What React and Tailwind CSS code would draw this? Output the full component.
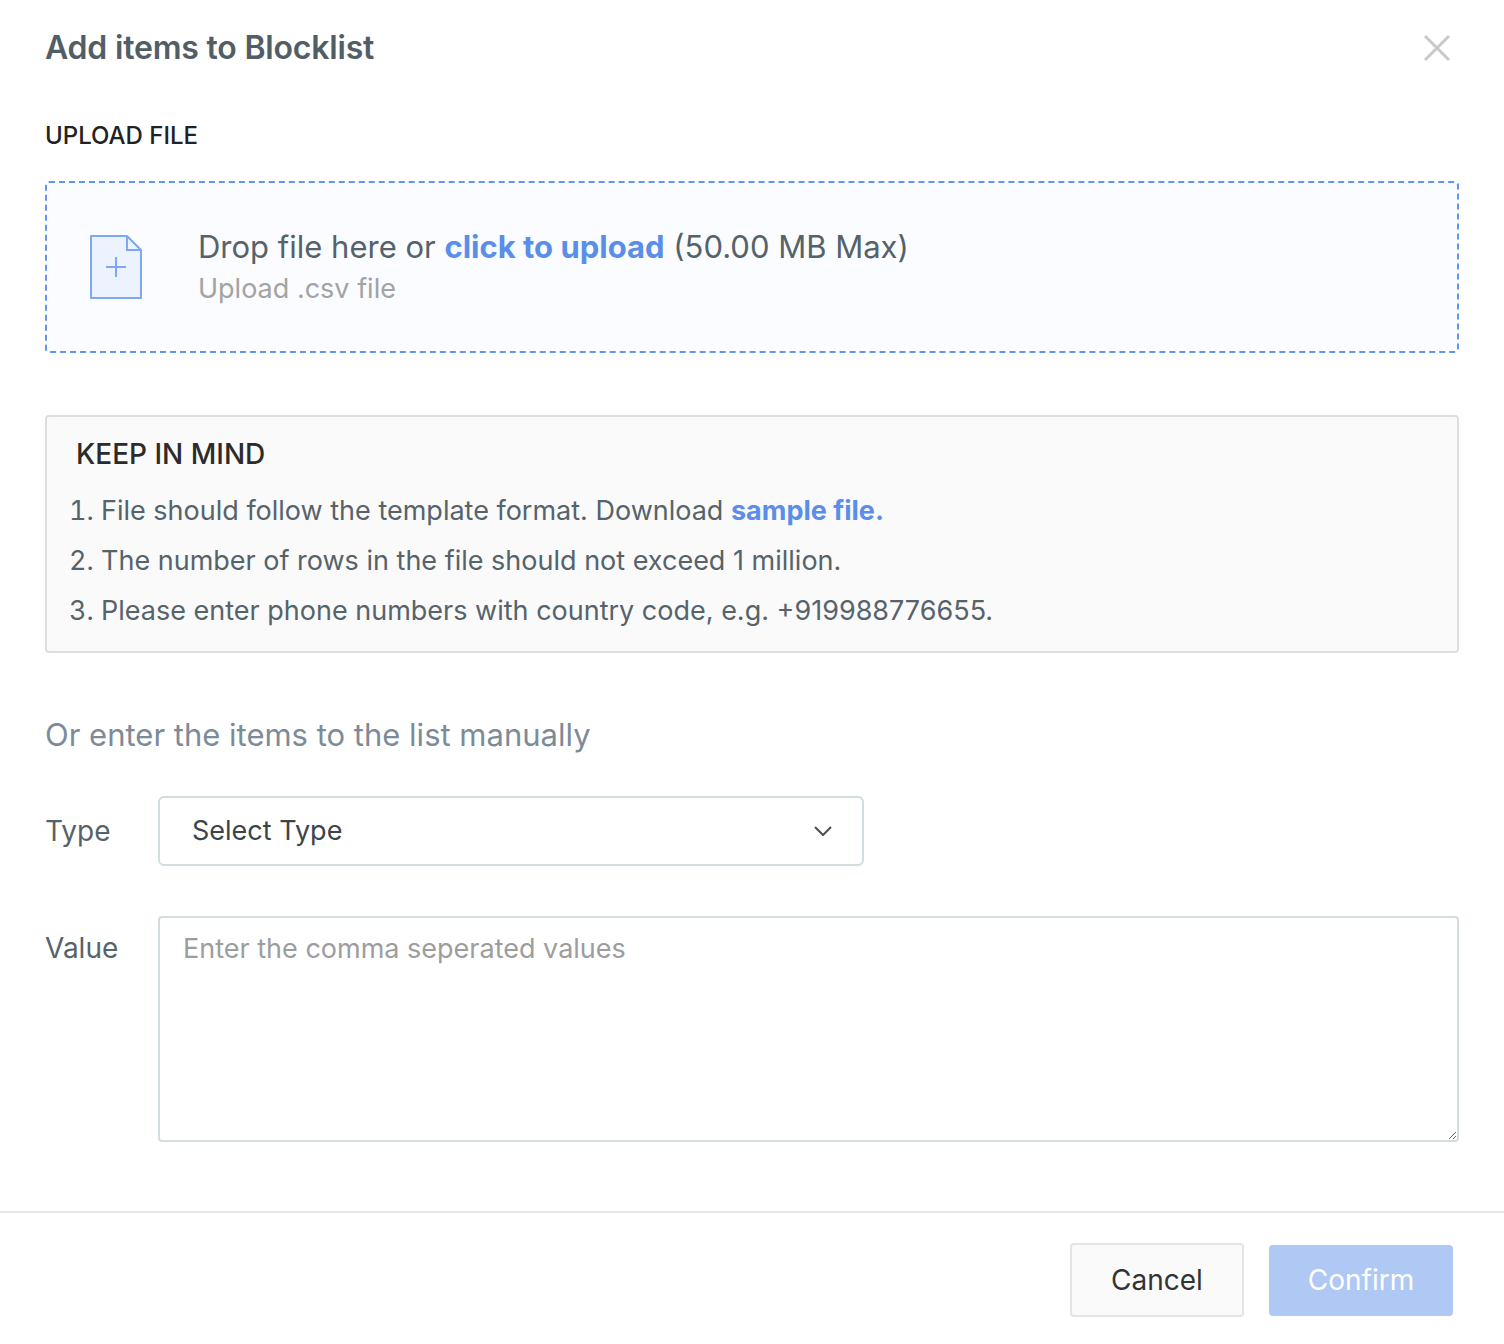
import { useState } from 'react';

function CloseIcon() {
  return (
    <svg width="28" height="28" viewBox="0 0 28 28" fill="none">
      <path d="M2 2 L26 26 M26 2 L2 26" stroke="#c9c9c9" strokeWidth="3" />
    </svg>
  );
}

function FileIcon() {
  return (
    <svg width="52" height="64" viewBox="0 0 52 64" fill="none">
      <path d="M1 1 H37 L51 15 V63 H1 Z" fill="#edf3fe" stroke="#7ea8f1" strokeWidth="2" strokeLinejoin="round" />
      <path d="M37 1 V15 H51" stroke="#7ea8f1" strokeWidth="2" />
      <path d="M26 22 V42 M16 32 H36" stroke="#7ea8f1" strokeWidth="2" />
    </svg>
  );
}

function Chevron() {
  return (
    <svg width="18" height="10" viewBox="0 0 18 10" fill="none">
      <path d="M1 1 L9 9 L17 1" stroke="#4a4f54" strokeWidth="2" />
    </svg>
  );
}

export default function App() {
  const [value, setValue] = useState('');

  return (
    <div className="min-h-screen bg-white font-['Inter','Liberation_Sans',sans-serif]">
      <div className="flex items-center justify-between pl-[45px] pr-[53px] pt-[28px]">
        <h2 className="text-[32px] font-semibold leading-[40px] tracking-[-0.2px] text-[#525e66]">
          Add items to Blocklist
        </h2>
        <button className="text-[#c9c9c9]">
          <CloseIcon />
        </button>
      </div>

      <div className="px-[45px]">
        <div className="mt-[52px] text-[24px] font-medium leading-[32px] text-[#222]">
          UPLOAD FILE
        </div>

        <div className="mt-[29px] flex h-[172px] items-center rounded-[4px] border-2 border-dashed border-[#6395ee] bg-[#fafcff] pl-[43px]">
          <FileIcon />
          <div className="ml-[56px]">
            <div className="text-[31px] leading-[44px] text-[#55626a]">
              Drop file here or{' '}
              <span className="font-bold text-[#5a8ee9]">click to upload</span>{' '}
              (50.00 MB Max)
            </div>
            <div className="text-[27px] leading-[40px] text-[#a3a3a3]">
              Upload .csv file
            </div>
          </div>
        </div>

        <div className="mt-[62px] rounded-[4px] border-2 border-[#dedede] bg-[#fafafa] px-[29px] pb-[15px] pt-[19px]">
          <div className="text-[28px] font-medium leading-[36px] text-[#2b2b2b]">
            KEEP IN MIND
          </div>
          <ol className="mt-[14px] list-decimal pl-[25px] text-[27px] leading-[50px] text-[#56636b]">
            <li>
              File should follow the template format. Download{' '}
              <a className="font-bold text-[#5a8ee9]" href="#sample">
                sample file.
              </a>
            </li>
            <li>The number of rows in the file should not exceed 1 million.</li>
            <li>
              Please enter phone numbers with country code, e.g. +919988776655.
            </li>
          </ol>
        </div>

        <div className="mt-[62px] text-[31px] leading-[40px] text-[#7d8b98]">
          Or enter the items to the list manually
        </div>

        <div className="mt-[41px] flex items-center">
          <div className="w-[113px] text-[28px] text-[#56636b]">Type</div>
          <button className="flex h-[70px] w-[706px] items-center justify-between rounded-[6px] border-2 border-[#d3dcdf] bg-white pl-[32px] pr-[30px] text-left">
            <span className="text-[27px] text-[#3c4449]">Select Type</span>
            <Chevron />
          </button>
        </div>

        <div className="mt-[50px] flex items-start">
          <div className="w-[113px] pt-[14px] text-[28px] leading-[36px] text-[#56636b]">
            Value
          </div>
          <textarea
            value={value}
            onChange={(e) => setValue(e.target.value)}
            placeholder="Enter the comma seperated values"
            className="h-[226px] flex-1 rounded-[4px] border-2 border-[#d3dcdf] bg-white px-[23px] pt-[13px] text-[27px] leading-[36px] text-[#3c4449] outline-none placeholder:text-[#9d9d9d]"
          />
        </div>
      </div>

      <div className="mt-[69px] border-t-2 border-[#e6e6e6]" />

      <div className="flex items-center justify-end gap-[25px] pr-[51px] pt-[30px]">
        <button className="h-[74px] w-[174px] rounded-[4px] border-2 border-[#e4e4e4] bg-[#fafafa] text-[28px] text-[#333]">
          Cancel
        </button>
        <button
          disabled
          className="h-[71px] w-[184px] rounded-[4px] bg-[#afc8f4] text-[28px] text-white"
        >
          Confirm
        </button>
      </div>
    </div>
  );
}
